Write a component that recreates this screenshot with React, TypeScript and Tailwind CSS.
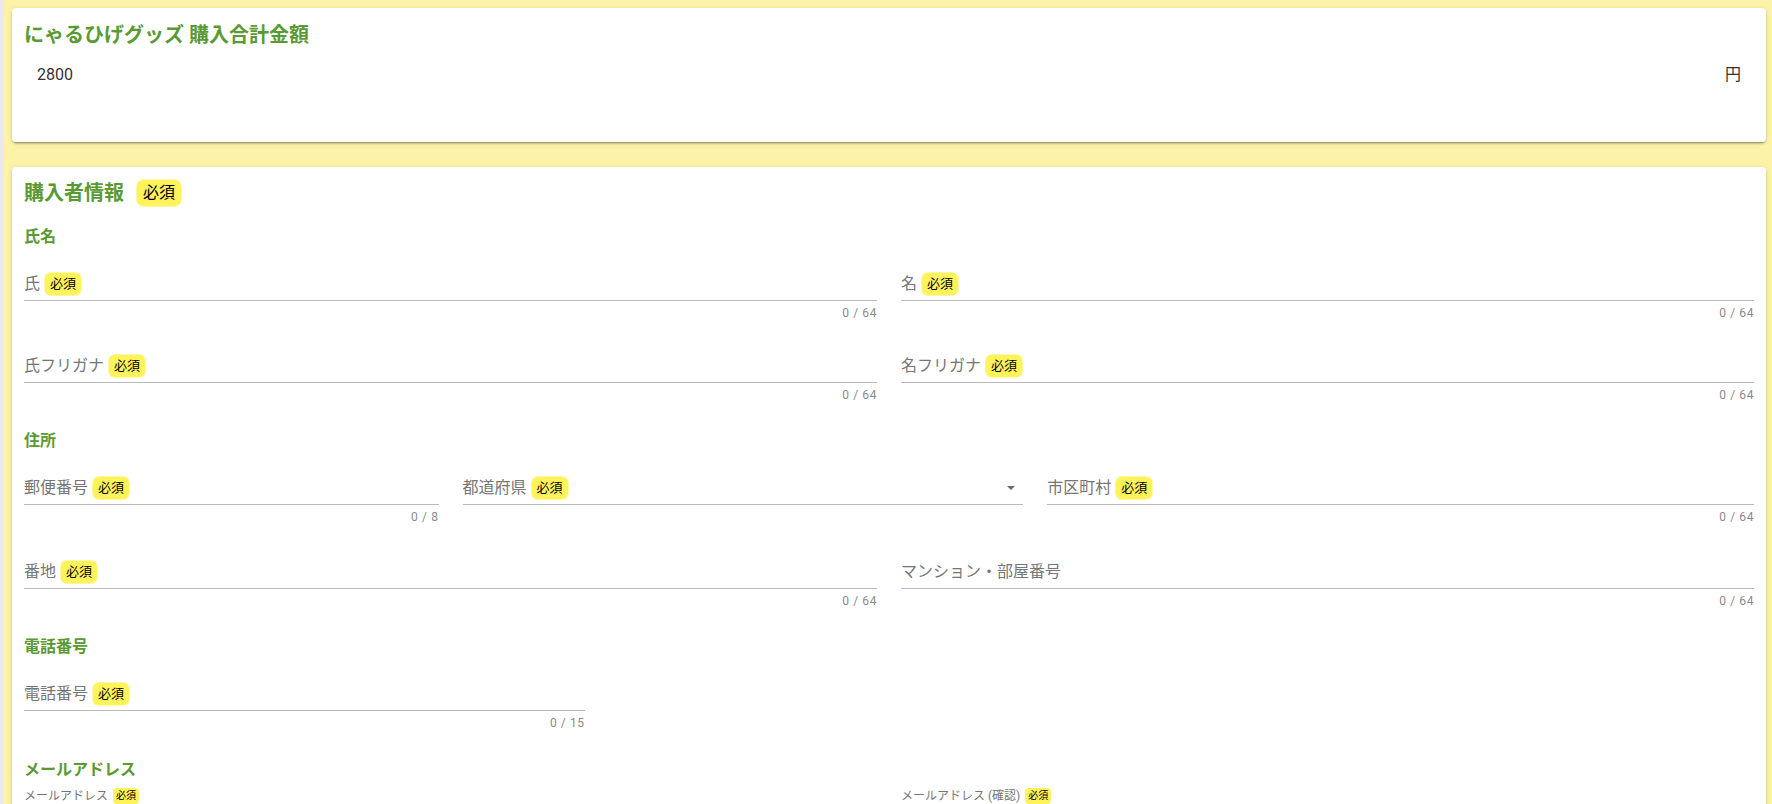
import React from "react";

function Badge({ size = "md" }: { size?: "lg" | "md" | "sm" }) {
  if (size === "lg")
    return (
      <span className="ml-[13px] inline-flex h-[26px] items-center rounded-[7px] bg-[#fff35c] px-[6px] text-[16px] font-normal leading-none text-black ring-1 ring-[#fff7a3]">
        必須
      </span>
    );
  if (size === "sm")
    return (
      <span className="ml-[5px] inline-flex h-[16px] items-center rounded-[4px] bg-[#fff35c] px-[3px] text-[10px] leading-none text-black">
        必須
      </span>
    );
  return (
    <span className="ml-[5px] inline-flex h-[22px] items-center rounded-[6px] bg-[#fff35c] px-[5px] text-[13px] leading-none text-black ring-1 ring-[#fff7a3]">
      必須
    </span>
  );
}

function Field({
  label,
  req = true,
  counter,
  select = false,
  span,
}: {
  label: string;
  req?: boolean;
  counter?: string;
  select?: boolean;
  span: string;
}) {
  return (
    <div className={span}>
      <div className="flex h-[34px] items-center border-b border-[#b9b9b9]">
        <span className="text-[16px] leading-6 text-[#767676]">{label}</span>
        {req && <Badge />}
        {select && (
          <svg className="ml-auto mr-2" width="8" height="4" viewBox="0 0 8 4">
            <path d="M0 0 L8 0 L4 4 Z" fill="#6b6b6b" />
          </svg>
        )}
      </div>
      <div className="mt-[4px] h-4 text-right text-[12px] leading-4 tracking-[0.6px] text-[#8a8a8a]">
        {counter}
      </div>
    </div>
  );
}

function Heading({ children, className = "" }: { children: React.ReactNode; className?: string }) {
  return (
    <div className={`h-6 text-[16px] font-bold leading-6 text-[#5a9a32] ${className}`}>{children}</div>
  );
}

const card =
  "rounded-[4px] bg-white shadow-[0_3px_1px_-2px_rgba(0,0,0,0.2),0_2px_2px_0_rgba(0,0,0,0.14),0_1px_5px_0_rgba(0,0,0,0.12)]";

export default function App() {
  return (
    <div className="min-h-screen border-l-[3px] border-[#e9e9e9] bg-[#fcf3a9] pb-10 pl-[9px] pr-[6px] pt-[8px] font-[Roboto,'Noto_Sans_CJK_JP',sans-serif]">
      <div className={`${card} px-3 pb-[55px] pt-[13px]`}>
        <div className="h-7 text-[20px] font-bold leading-7 text-[#5a9a32]">
          にゃるひげグッズ 購入合計金額
        </div>
        <div className="mt-[14px] flex h-6 items-center justify-between px-[13px] text-[16px] leading-6 text-[#333]">
          <span>2800</span>
          <span>円</span>
        </div>
      </div>

      <div className={`${card} mt-[25px] px-3 pb-6 pt-3`}>
        <div className="flex h-7 items-center">
          <span className="text-[20px] font-bold leading-7 text-[#5a9a32]">購入者情報</span>
          <Badge size="lg" />
        </div>

        <Heading className="mt-[18px]">氏名</Heading>
        <div className="mt-[18px] grid grid-cols-12 gap-x-6 gap-y-[28px]">
          <Field span="col-span-6" label="氏" counter="0 / 64" />
          <Field span="col-span-6" label="名" counter="0 / 64" />
          <Field span="col-span-6" label="氏フリガナ" counter="0 / 64" />
          <Field span="col-span-6" label="名フリガナ" counter="0 / 64" />
        </div>

        <Heading className="mt-[26px]">住所</Heading>
        <div className="mt-[18px] grid grid-cols-12 gap-x-6 gap-y-[30px]">
          <Field span="col-span-3" label="郵便番号" counter="0 / 8" />
          <Field span="col-span-4" label="都道府県" select />
          <Field span="col-span-5" label="市区町村" counter="0 / 64" />
          <Field span="col-span-6" label="番地" counter="0 / 64" />
          <Field span="col-span-6" label="マンション・部屋番号" req={false} counter="0 / 64" />
        </div>

        <Heading className="mt-[26px]">電話番号</Heading>
        <div className="mt-[18px] grid grid-cols-12 gap-x-6">
          <Field span="col-span-4" label="電話番号" counter="0 / 15" />
        </div>

        <Heading className="mt-[27px]">メールアドレス</Heading>
        <div className="mt-[6px] grid grid-cols-12 gap-x-6">
          <div className="col-span-6 flex h-4 items-center">
            <span className="text-[12px] leading-4 text-[#767676]">メールアドレス</span>
            <Badge size="sm" />
          </div>
          <div className="col-span-6 flex h-4 items-center">
            <span className="text-[12px] leading-4 text-[#767676]">メールアドレス (確認)</span>
            <Badge size="sm" />
          </div>
          <div className="col-span-6 mt-4 h-[34px] border-b border-[#b9b9b9]" />
          <div className="col-span-6 mt-4 h-[34px] border-b border-[#b9b9b9]" />
        </div>
      </div>
    </div>
  );
}
